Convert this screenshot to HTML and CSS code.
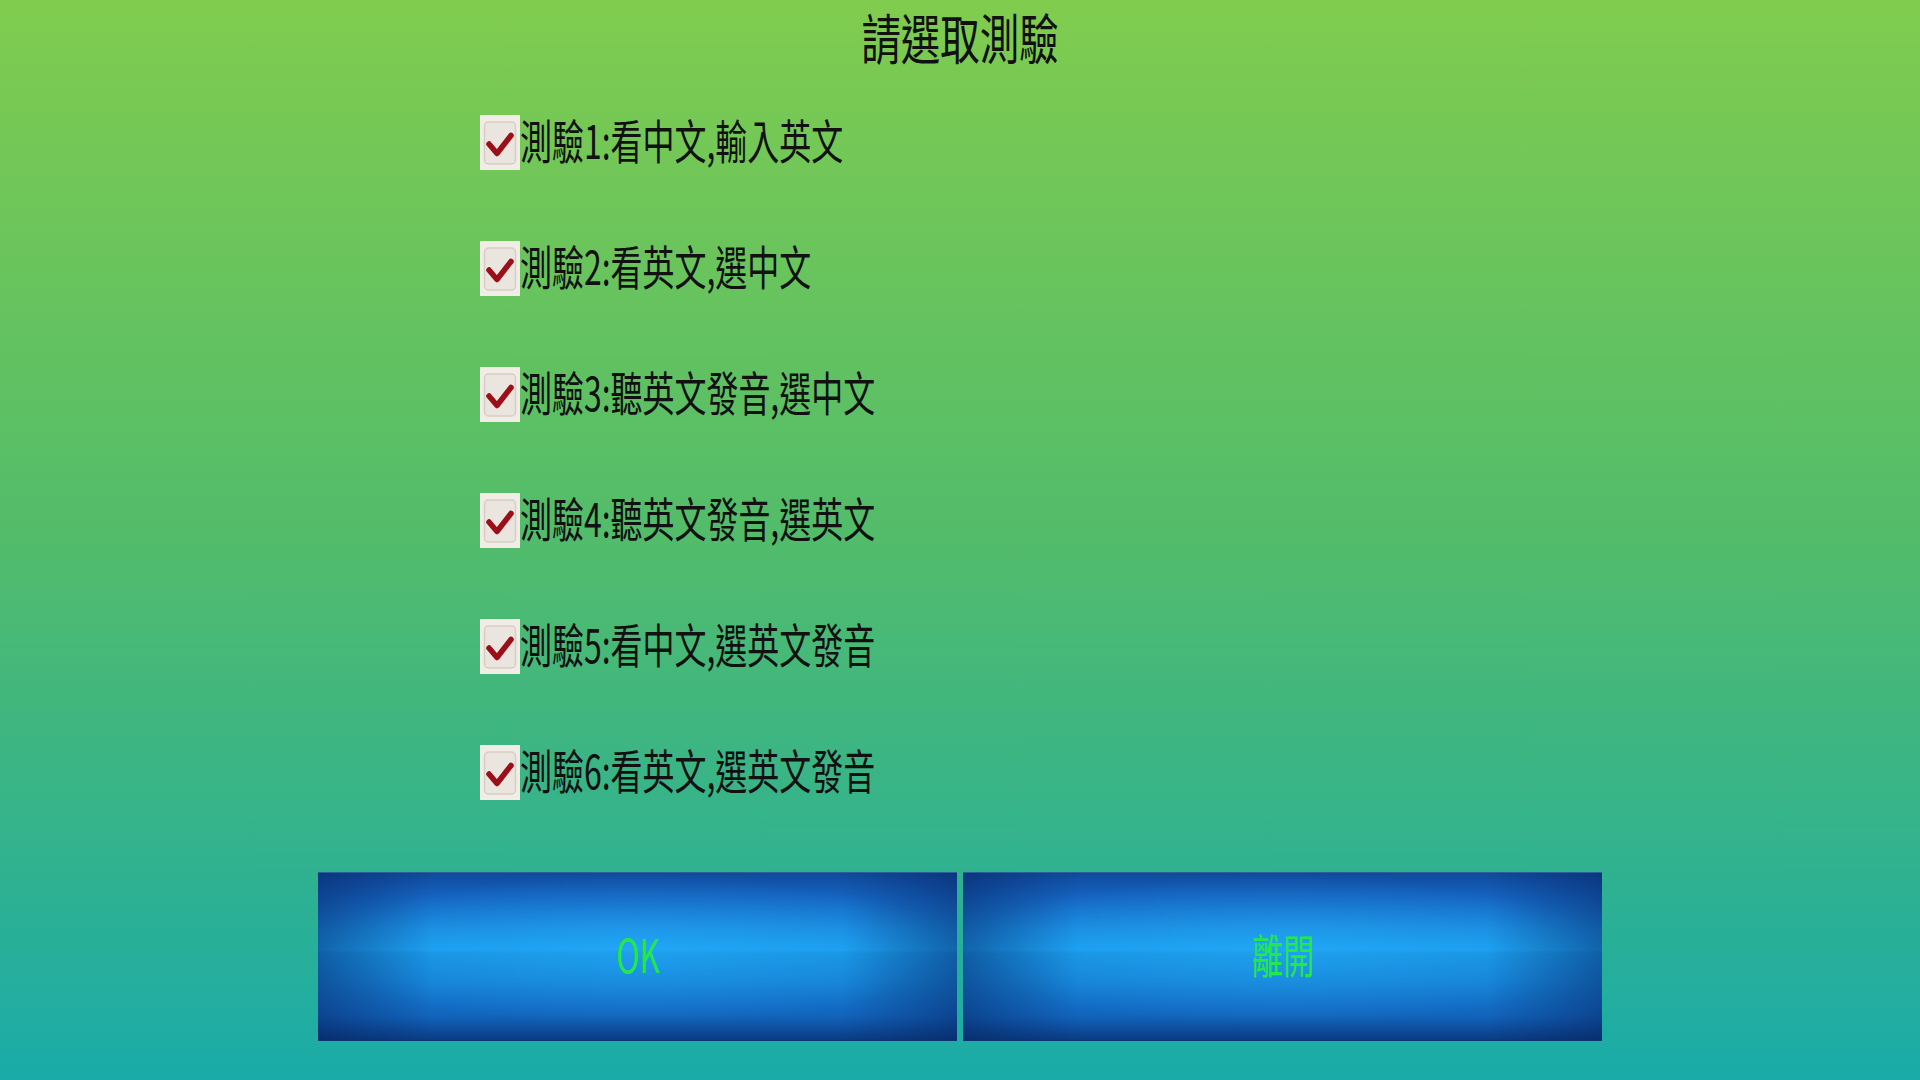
FILE: index.html
```html
<!DOCTYPE html>
<html lang="zh-Hant">
<head>
  <meta charset="UTF-8">
  <title>請選取測驗</title>
  <link rel="stylesheet" href="styles.css">
</head>
<body>
  <svg class="defs" width="0" height="0">
    <symbol id="checked" viewBox="0 0 40 55">
      <rect x="0" y="0" width="40" height="55" fill="#f1ede6"/>
      <rect x="4.5" y="7" width="31" height="42" rx="4" fill="#eae5de" stroke="#d5cec5" stroke-width="1.5"/>
      <path d="M9 29 L17 38.5 L31 20.5" fill="none" stroke="#9c0e18" stroke-width="5.5" stroke-linecap="round" stroke-linejoin="round"/>
    </symbol>
  </svg>

  <div class="screen">
    <h1 class="title"><span>請選取測驗</span></h1>

    <ul class="test-list">
      <li class="test-item">
        <svg class="check"><use href="#checked"/></svg>
        <span class="label">測驗1:看中文,輸入英文</span>
      </li>
      <li class="test-item">
        <svg class="check"><use href="#checked"/></svg>
        <span class="label">測驗2:看英文,選中文</span>
      </li>
      <li class="test-item">
        <svg class="check"><use href="#checked"/></svg>
        <span class="label">測驗3:聽英文發音,選中文</span>
      </li>
      <li class="test-item">
        <svg class="check"><use href="#checked"/></svg>
        <span class="label">測驗4:聽英文發音,選英文</span>
      </li>
      <li class="test-item">
        <svg class="check"><use href="#checked"/></svg>
        <span class="label">測驗5:看中文,選英文發音</span>
      </li>
      <li class="test-item">
        <svg class="check"><use href="#checked"/></svg>
        <span class="label">測驗6:看英文,選英文發音</span>
      </li>
    </ul>

    <div class="actions">
      <button class="btn"><span>OK</span></button>
      <button class="btn"><span>離開</span></button>
    </div>
  </div>
</body>
</html>
```

FILE: styles.css
```css
html, body {
  margin: 0;
  padding: 0;
}
body {
  width: 1920px;
  height: 1080px;
  overflow: hidden;
  background: linear-gradient(to bottom, #80cc4e 0%, #52bc6b 50%, #1aaba8 100%);
  font-family: "Noto Sans CJK TC", "Noto Sans", sans-serif;
  color: #111;
}
.defs {
  position: absolute;
}
.title {
  margin: 0;
  height: 79px;
  display: flex;
  align-items: center;
  justify-content: center;
  font-size: 54px;
  font-weight: normal;
  line-height: 1;
}
.title span {
  display: inline-block;
  transform: translateY(-3px) scaleX(0.73);
}
.test-list {
  list-style: none;
  margin: 0;
  padding: 0 0 0 480px;
}
.test-item {
  height: 126px;
  display: flex;
  align-items: center;
}
.check {
  width: 40px;
  height: 55px;
  flex: none;
}
.label {
  display: inline-block;
  font-size: 47px;
  line-height: 1;
  white-space: nowrap;
  transform: translateY(-4px) scaleX(0.68);
  transform-origin: left center;
}
.actions {
  display: flex;
  justify-content: center;
  gap: 6px;
  margin-top: 37px;
}
.btn {
  width: 639px;
  height: 169px;
  border: 0;
  padding: 0;
  font-family: "Noto Sans CJK TC", "Noto Sans", sans-serif;
  font-size: 46px;
  line-height: 1;
  color: #22e84a;
  box-shadow: inset 0 1px 0 #2a5f9c, inset 0 -1px 0 #0a3572;
  background:
    linear-gradient(to right, rgba(5, 30, 90, 0.45) 0%, rgba(5, 30, 90, 0) 18%, rgba(5, 30, 90, 0) 82%, rgba(5, 30, 90, 0.45) 100%),
    radial-gradient(ellipse 50% 45% at 50% 46%, rgba(40, 180, 255, 0.4), rgba(40, 180, 255, 0)),
    linear-gradient(to bottom, #10489a 0%, #1566c2 16%, #1a8ce0 34%, #1b9eee 46%, #1892e2 48%, #1682d6 64%, #1264bc 85%, #0a3a80 100%);
}
.btn span {
  display: inline-block;
  transform: translateY(-4px) scaleX(0.68);
}
```
